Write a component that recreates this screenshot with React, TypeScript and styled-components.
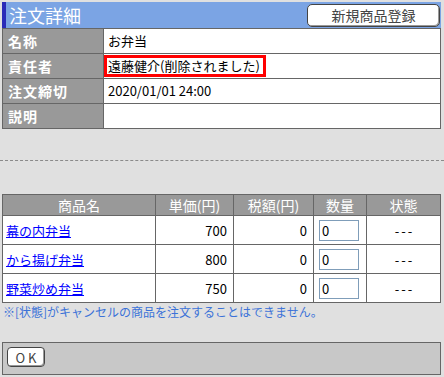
import React from "react"
import styled, { createGlobalStyle } from "styled-components"

const items = [
  { name: "幕の内弁当", price: 700, tax: 0, qty: "0" },
  { name: "から揚げ弁当", price: 800, tax: 0, qty: "0" },
  { name: "野菜炒め弁当", price: 750, tax: 0, qty: "0" },
]

const App = () => {
  return (
    <>
      <GlobalStyle />
      <Page>
        <Header>
          <Title>注文詳細</Title>
          <TopButton>新規商品登録</TopButton>
        </Header>
        <DetailTable>
          <colgroup>
            <col style={{ width: 101 }} />
            <col />
          </colgroup>
          <tbody>
            <tr>
              <Label>名称</Label>
              <Value>お弁当</Value>
            </tr>
            <tr>
              <Label>責任者</Label>
              <Value>
                <Highlight>遠藤健介(削除されました)</Highlight>
              </Value>
            </tr>
            <tr>
              <Label>注文締切</Label>
              <Value>2020/01/01 24:00</Value>
            </tr>
            <tr>
              <Label>説明</Label>
              <Value></Value>
            </tr>
          </tbody>
        </DetailTable>
        <Separator />
        <ItemTable>
          <colgroup>
            <col style={{ width: 153 }} />
            <col style={{ width: 78 }} />
            <col style={{ width: 80 }} />
            <col style={{ width: 53 }} />
            <col />
          </colgroup>
          <thead>
            <tr>
              <HeadCell>商品名</HeadCell>
              <HeadCell>単価(円)</HeadCell>
              <HeadCell>税額(円)</HeadCell>
              <HeadCell>数量</HeadCell>
              <HeadCell>状態</HeadCell>
            </tr>
          </thead>
          <tbody>
            {items.map(item => (
              <tr key={item.name}>
                <NameCell>
                  <ItemLink href="#">{item.name}</ItemLink>
                </NameCell>
                <NumCell>{item.price}</NumCell>
                <NumCell>{item.tax}</NumCell>
                <QtyCell>
                  <QtyInput defaultValue={item.qty} />
                </QtyCell>
                <StateCell>---</StateCell>
              </tr>
            ))}
          </tbody>
        </ItemTable>
        <Note>※[状態]がキャンセルの商品を注文することはできません。</Note>
        <Footer>
          <OkButton>OK</OkButton>
        </Footer>
      </Page>
    </>
  )
}

export default App

const GlobalStyle = createGlobalStyle`
  body {
    margin: 0;
    background: #e0e0e0;
    font-family: "Noto Sans CJK JP", "Noto Sans", sans-serif;
    font-size: 13px;
    color: #000;
  }
`

const Page = styled.div`
  padding: 2px 3px 0 2px;
`

const Header = styled.div`
  display: flex;
  align-items: center;
  justify-content: space-between;
  height: 26px;
  background: #7ba4e4;
  border-left: 4px solid #2a2ab8;
  padding: 0 1px 0 3px;
`

const Title = styled.div`
  color: #fff;
  font-size: 18px;
  line-height: 1;
`

const TopButton = styled.button`
  width: 133px;
  height: 23px;
  padding: 0;
  background: #fff;
  border: 1px solid #444;
  border-radius: 5px;
  box-shadow: inset -1px -1px 0 #999;
  font-family: inherit;
  font-size: 14px;
  line-height: 1;
  color: #444;
`

const DetailTable = styled.table`
  width: 100%;
  border-collapse: collapse;
  border: 1px solid #666;
  table-layout: fixed;

  tr {
    height: 25px;
  }
`

const Label = styled.th`
  background: #999;
  border: 1px solid #666;
  color: #fff;
  font-size: 14px;
  font-weight: bold;
  letter-spacing: 1px;
  text-align: left;
  padding: 0 0 0 5px;
`

const Value = styled.td`
  background: #fff;
  border: 1px solid #666;
  padding: 0 4px;
  line-height: 16px;
`

const Highlight = styled.span`
  display: inline-block;
  margin-left: -4px;
  padding: 0 3px 0 1px;
  border: 3px solid #f00;
  line-height: 16px;
`

const Separator = styled.div`
  margin: 31px -3px 33px -2px;
  border-top: 1px dashed #8a8a8a;
`

const ItemTable = styled.table`
  width: 100%;
  border-collapse: collapse;
  border: 1px solid #666;
  table-layout: fixed;

  tbody tr {
    height: 29px;
  }
`

const HeadCell = styled.th`
  height: 20px;
  background: #999;
  border: 1px solid #666;
  color: #fff;
  font-size: 14px;
  font-weight: normal;
  text-align: center;
  padding: 0;
  line-height: 1;
`

const NameCell = styled.td`
  background: #fff;
  border: 1px solid #666;
  padding: 0 3px;
`

const ItemLink = styled.a`
  color: #0000ff;
  text-decoration: underline;
`

const NumCell = styled.td`
  background: #fff;
  border: 1px solid #666;
  text-align: right;
  padding: 0 6px 0 0;
`

const QtyCell = styled.td`
  background: #fff;
  border: 1px solid #666;
  padding: 0 0 0 5px;
`

const QtyInput = styled.input`
  box-sizing: border-box;
  width: 40px;
  height: 21px;
  border: 1px solid #7f9db9;
  padding: 0 2px;
  font-family: inherit;
  font-size: 13px;
`

const StateCell = styled.td`
  background: #fff;
  border: 1px solid #666;
  text-align: center;
  letter-spacing: 2px;
  text-indent: 2px;
`

const Note = styled.div`
  color: #3b72d8;
  font-size: 12px;
  line-height: 16px;
  padding: 1px 0 0 1px;
`

const Footer = styled.div`
  margin-top: 22px;
  height: 33px;
  box-sizing: border-box;
  background: #c8c8c8;
  border: 1px solid #666;
  padding: 4px 0 0 4px;
`

const OkButton = styled.button`
  width: 38px;
  height: 20px;
  padding: 0;
  background: #fff;
  border: 1px solid #444;
  border-radius: 4px;
  box-shadow: inset -1px -1px 0 #999;
  font-family: inherit;
  font-size: 13px;
  letter-spacing: 3px;
  text-indent: 3px;
  line-height: 1;
  color: #444;
`
